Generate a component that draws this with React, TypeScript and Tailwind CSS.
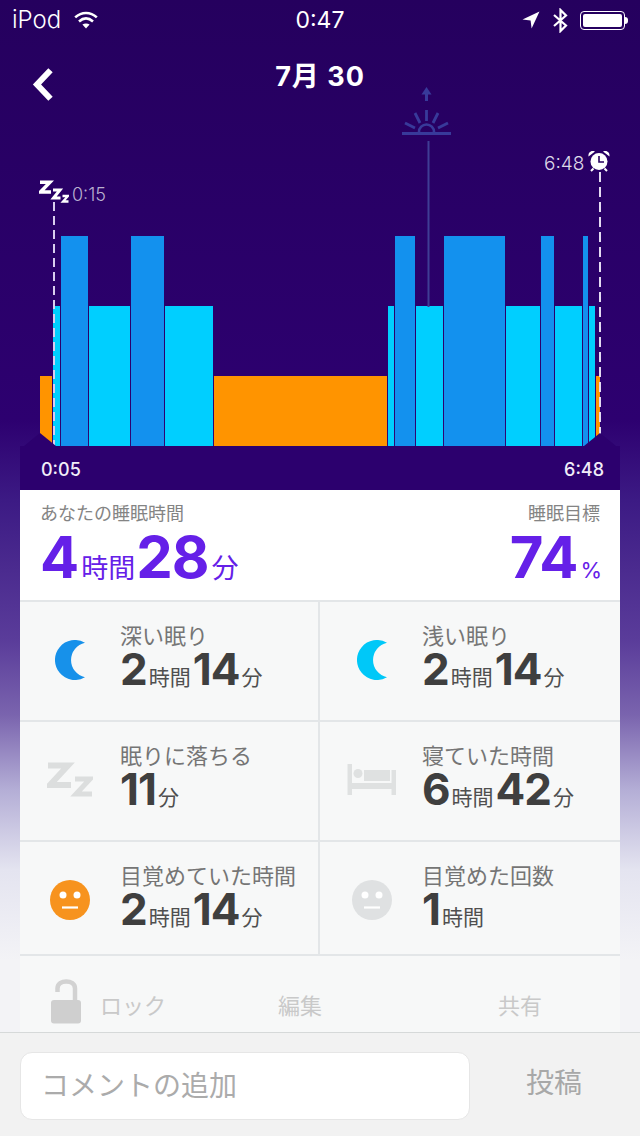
const bars: { kind: "awake" | "light" | "deep"; w: number }[] = [
  { kind: "awake", w: 12 },
  { kind: "light", w: 7 },
  { kind: "deep", w: 27 },
  { kind: "light", w: 41 },
  { kind: "deep", w: 33 },
  { kind: "light", w: 48 },
  { kind: "awake", w: 173 },
  { kind: "light", w: 6 },
  { kind: "deep", w: 20 },
  { kind: "light", w: 27 },
  { kind: "deep", w: 61 },
  { kind: "light", w: 34 },
  { kind: "deep", w: 13 },
  { kind: "light", w: 27 },
  { kind: "deep", w: 5 },
  { kind: "light", w: 6 },
  { kind: "awake", w: 4 },
];

const barStyle = {
  awake: "h-[70px] bg-[#ff9400]",
  light: "h-[140px] bg-[#00cfff]",
  deep: "h-[210px] bg-[#1391ee]",
};

function StatusBar() {
  return (
    <div className="flex h-10 shrink-0 items-center justify-between pl-3 pr-3 text-white">
      <div className="flex w-[200px] items-center gap-[13px]">
        <span className="text-[24px] font-light leading-none">iPod</span>
        <svg width="24" height="18" viewBox="0 0 24 18" fill="none" stroke="white" strokeWidth="2.6">
          <path d="M1.2 6.4C7.6 .6 16.4 .6 22.8 6.4" />
          <path d="M5 10.4C9.4 6.6 14.6 6.6 19 10.4" />
          <path d="M12 17.6L8.4 13.6C10.6 12.2 13.4 12.2 15.6 13.6Z" fill="white" stroke="none" />
        </svg>
      </div>
      <span className="text-[23px] font-normal leading-none">0:47</span>
      <div className="flex w-[200px] items-center justify-end gap-[11px]">
        <svg width="18" height="18" viewBox="0 0 18 18" fill="white" className="mr-[1px]">
          <path d="M17.5 .5L.5 8.6L8.6 9.4L9.6 17.5Z" />
        </svg>
        <svg width="17" height="25" viewBox="0 0 17 24" fill="none" stroke="white" strokeWidth="2.2">
          <path d="M2 6.5L14 17L8.5 22.5V1.5L14 7L2 17.5" />
        </svg>
        <div className="flex items-center">
          <div className="h-[19px] w-[45px] rounded-[4px] border border-white p-[2px]">
            <div className="h-full w-full rounded-[2px] bg-white" />
          </div>
          <div className="h-[7px] w-[3px] rounded-r-sm bg-white" />
        </div>
      </div>
    </div>
  );
}

function Header() {
  return (
    <div className="flex h-[74px] shrink-0 justify-between px-[32px]">
      <svg width="21" height="33" viewBox="0 0 21 33" fill="none" stroke="white" strokeWidth="6" className="mt-[28px]">
        <path d="M18.5 2.2L5 16.5L18.5 30.8" />
      </svg>
      <span className="mt-[21px] text-[27px] font-bold leading-8 tracking-[1px] text-white">7月 30</span>
      <div className="w-[21px]" />
    </div>
  );
}

function Chart() {
  return (
    <div className="relative flex h-[332px] shrink-0 items-end gap-px pl-[40px]">
      {bars.map((bar, i) => (
        <div key={i} className={`${barStyle[bar.kind]} shrink-0`} style={{ width: bar.w }} />
      ))}

      {/* sunrise marker */}
      <svg width="50" height="220" viewBox="0 0 50 220" fill="none" stroke="#383a9a" className="absolute left-[402px] top-[-27px]">
        <path d="M19.500 7.500L24.500 0L29.500 7.500Z" fill="#383a9a" stroke="none" />
        <path d="M24.500 7V14" strokeWidth="3" />
        <path d="M0 46.500H49" strokeWidth="3" />
        <path d="M17 45A7.500 7.500 0 0 1 32 45" strokeWidth="2.600" />
        <path d="M24.500 23V34M13 26L18 36M36 26L31 36M3 36L13 41M46 36L36 41" strokeWidth="2.800" />
        <path d="M26.500 54V220" strokeWidth="2" stroke="#3f3d95" />
      </svg>

      {/* fell asleep marker */}
      <svg width="30" height="24" viewBox="0 0 30 24" fill="none" stroke="white" className="absolute left-[39px] top-[66px]">
        <path d="M1 2.200H11L1.500 12H12" strokeWidth="3.400" />
        <path d="M14 10H21L14.500 18H21.500" strokeWidth="3" />
        <path d="M23.500 16H29L24 21.500H29.500" strokeWidth="2.300" />
      </svg>
      <span className="absolute left-[72px] top-[69px] text-[18px] font-light leading-6 text-[#b9b0d0]">0:15</span>
      <div className="absolute bottom-0 left-[53px] h-[244px] w-[2px] bg-[repeating-linear-gradient(180deg,#d9cdee_0,#d9cdee_9px,transparent_9px,transparent_14px)]" />

      {/* wake up marker */}
      <span className="absolute left-[544px] top-[38px] text-[19px] font-light leading-6 text-[#ddd9e8]">6:48</span>
      <svg width="24" height="24" viewBox="0 0 24 24" className="absolute left-[587px] top-[35px]">
        <circle cx="12" cy="12.500" r="8.500" fill="white" />
        <path d="M1.500 7.500C1 3.500 4 1 8 2.500ZM22.500 7.500C23 3.500 20 1 16 2.500Z" fill="white" />
        <path d="M4 22L6.500 19.500M20 22L17.500 19.500" stroke="white" strokeWidth="2" />
        <path d="M12 7V13H17" stroke="#26005f" strokeWidth="1.600" fill="none" />
      </svg>
      <div className="absolute bottom-0 left-[599px] h-[274px] w-[2px] bg-[repeating-linear-gradient(180deg,#e4dcf2_0,#e4dcf2_10px,transparent_10px,transparent_15px)]" />

      {/* corner notches over the bars */}
      <div className="absolute bottom-0 left-[24px] h-[13px] w-[32px] bg-[#2c006e] [clip-path:polygon(50%_0,100%_100%,0_100%)]" />
      <div className="absolute bottom-0 left-[584px] h-[13px] w-[32px] bg-[#2c006e] [clip-path:polygon(50%_0,100%_100%,0_100%)]" />
    </div>
  );
}

function Duration({ parts, big }: { parts: [string, string][]; big?: boolean }) {
  return (
    <div className={`flex items-baseline ${big ? "text-[#6520e8]" : "text-[#3f3f3f]"}`}>
      {parts.map(([value, unit]) => (
        <span key={unit} className="flex items-baseline">
          <span className={big ? "text-[58px] font-bold leading-[62px] tracking-[-1px]" : "text-[44px] font-bold leading-[42px] tracking-[-1px]"}>
            {value}
          </span>
          <span className={big ? "ml-[3px] mr-[1px] text-[27px] leading-none" : "ml-[2px] mr-[2px] text-[21px] leading-none text-[#4f4f4f]"}>
            {unit}
          </span>
        </span>
      ))}
    </div>
  );
}

function Moon({ color }: { color: string }) {
  return (
    <svg width="31" height="40" viewBox="0 0 31 40">
      <path d="M30 2.700A20 20 0 1 0 30 37.300A17.700 17.700 0 0 1 30 2.700Z" fill={color} />
    </svg>
  );
}

function Face({ color }: { color: string }) {
  return (
    <svg width="40" height="40" viewBox="0 0 40 40">
      <circle cx="20" cy="20" r="20" fill={color} />
      <circle cx="13" cy="15" r="3.500" fill="white" />
      <circle cx="27" cy="15" r="3.500" fill="white" />
      <path d="M12 27.500H28" stroke="white" strokeWidth="2.200" />
    </svg>
  );
}

function GreyZzz() {
  return (
    <svg width="46" height="36" viewBox="0 0 46 36" fill="none" stroke="#dcdede" className="mb-[1px]">
      <path d="M1 3.500H21L3 23H24" strokeWidth="6" />
      <path d="M28 17H43L29 32H45" strokeWidth="5" />
    </svg>
  );
}

function Bed() {
  return (
    <svg width="50" height="32" viewBox="0 0 50 32" fill="#dfe1e1">
      <rect x="0.500" y="0" width="4.500" height="31" />
      <rect x="44.500" y="6" width="4.500" height="25" />
      <rect x="5" y="19" width="40" height="6" />
      <circle cx="11" cy="9.500" r="4.500" />
      <path d="M17 6H43V17H17Z" />
    </svg>
  );
}

function Stat({ icon, label, parts, right }: { icon: React.ReactNode; label: string; parts: [string, string][]; right?: boolean }) {
  return (
    <div className={`flex items-start bg-[#f7f8f8] ${right ? "pl-[2px]" : "border-r-2 border-[#e3e6e8]"}`}>
      <div className="flex h-[116px] w-[100px] shrink-0 items-center justify-center">{icon}</div>
      <div className="pt-[22px]">
        <div className="text-[22px] leading-6 text-[#757575]">{label}</div>
        <Duration parts={parts} />
      </div>
    </div>
  );
}

function Summary() {
  return (
    <div className="flex h-[110px] shrink-0 justify-between bg-white pl-5 pr-5 pt-[12px]">
      <div>
        <div className="text-[18px] leading-[24px] text-[#848484]">あなたの睡眠時間</div>
        <Duration big parts={[["4", "時間"], ["28", "分"]]} />
      </div>
      <div className="flex flex-col items-end">
        <div className="text-[18px] leading-[24px] text-[#848484]">睡眠目標</div>
        <div className="-mr-[2px] flex items-baseline text-[#6520e8]">
          <span className="text-[58px] font-bold leading-[62px] tracking-[-1px]">74</span>
          <span className="ml-[3px] text-[22px] leading-none">%</span>
        </div>
      </div>
    </div>
  );
}

function Actions() {
  return (
    <div className="flex h-[76px] shrink-0 items-start bg-[#f7f8f8] pl-[31px] text-[22px] leading-6 text-[#c9c9c9]">
      <svg width="30" height="46" viewBox="0 0 30 46" className="mt-[22px] shrink-0">
        <path d="M6.500 14V10.500C6.500 1 24 1 24 10.500V24" fill="none" stroke="#d2d2d2" strokeWidth="4.500" />
        <rect x="0" y="22" width="30" height="23.500" rx="3" fill="#cfcfcf" />
      </svg>
      <span className="ml-[19px] mt-[38px]">ロック</span>
      <span className="ml-[112px] mt-[38px]">編集</span>
      <span className="ml-[176px] mt-[38px]">共有</span>
    </div>
  );
}

function CommentBar() {
  return (
    <div className="flex h-[104px] shrink-0 items-start border-t border-[#d6d9d9] bg-[#f2f2f2] pl-5 pt-[19px]">
      <div className="flex h-[68px] w-[450px] items-center rounded-[12px] border border-[#e6e6e6] bg-white pl-[20px] text-[28px] text-[#ababab]">
        コメントの追加
      </div>
      <span className="ml-[56px] mt-[15px] text-[28px] leading-8 text-[#a8a8a8]">投稿</span>
    </div>
  );
}

export default function App() {
  return (
    <div className="flex h-[1136px] w-[640px] flex-col overflow-hidden bg-[linear-gradient(180deg,#25005e_0px,#2d0070_420px,#3c1a84_500px,#5a3c9a_640px,#7a64ae_715px,#b4aed6_790px,#e4e4f0_870px,#f3f3f6_960px)] [font-family:Inter,'Noto_Sans_CJK_JP',sans-serif]">
      <StatusBar />
      <Header />
      <Chart />
      <div className="flex h-[586px] flex-col overflow-hidden px-5">
        <div className="flex h-[44px] shrink-0 items-center justify-between bg-[#2c006e] pl-[21px] pr-[16px] pt-[3px] text-[18px] font-medium text-[#f1edf8]">
          <span>0:05</span>
          <span>6:48</span>
        </div>
        <Summary />
        <div className="grid shrink-0 grid-cols-[300px_300px] grid-rows-[118px_118px_112px] gap-y-[2px] border-y-2 border-[#e3e6e8] bg-[#e3e6e8]">
          <Stat icon={<Moon color="#1791ea" />} label="深い眠り" parts={[["2", "時間"], ["14", "分"]]} />
          <Stat right icon={<Moon color="#00c8f8" />} label="浅い眠り" parts={[["2", "時間"], ["14", "分"]]} />
          <Stat icon={<GreyZzz />} label="眠りに落ちる" parts={[["11", "分"]]} />
          <Stat right icon={<Bed />} label="寝ていた時間" parts={[["6", "時間"], ["42", "分"]]} />
          <Stat icon={<Face color="#f7931e" />} label="目覚めていた時間" parts={[["2", "時間"], ["14", "分"]]} />
          <Stat right icon={<Face color="#dfe1e2" />} label="目覚めた回数" parts={[["1", "時間"]]} />
        </div>
        <Actions />
      </div>
      <CommentBar />
    </div>
  );
}
